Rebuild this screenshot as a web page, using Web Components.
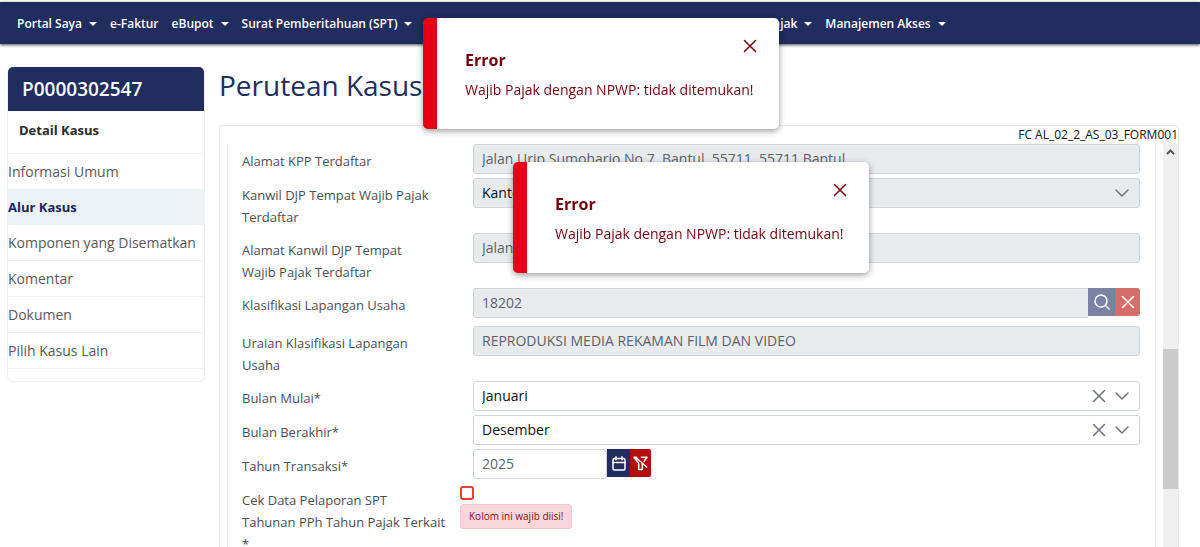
<!DOCTYPE html>
<html lang="id">
<head>
<meta charset="utf-8">
<meta name="viewport" content="width=device-width, initial-scale=1">
<title>Perutean Kasus</title>
<style>
  :root {
    --navy: #212c5f;
    --line: #e9e9ec;
    --field-line: #ced4da;
    --danger: #73000c;
  }
  body {
    margin: 0;
    background: #fff;
    font: 14px/22px "Open Sans", "Noto Sans", sans-serif;
    color: #495057;
    height: 100vh;
    overflow: hidden;
  }
</style>
</head>
<body>
<case-page></case-page>

<script>
const ICONS = {
  chevron: '<svg width="14" height="14" viewBox="0 0 14 14" fill="none" stroke="currentColor" stroke-width="1.5" stroke-linecap="round" stroke-linejoin="round"><path d="M1 4l6 6 6-6"/></svg>',
  times: '<svg width="14" height="14" viewBox="0 0 14 14" fill="none" stroke="currentColor" stroke-width="1.5" stroke-linecap="round"><path d="M1.5 1.5l11 11M12.5 1.5l-11 11"/></svg>',
  search: '<svg width="16" height="16" viewBox="0 0 16 16" fill="none" stroke="currentColor" stroke-width="1.5" stroke-linecap="round"><circle cx="7" cy="7" r="6"/><path d="M11.5 11.5L15 15"/></svg>',
  calendar: '<svg width="14" height="15" viewBox="0 0 14 15" fill="none" stroke="currentColor" stroke-width="1.5" stroke-linecap="round" stroke-linejoin="round"><rect x="1" y="2.5" width="12" height="11.5" rx="1.5"/><path d="M1 6.5h12M4 .8v3M10 .8v3"/></svg>',
  filter: '<svg width="15" height="15" viewBox="0 0 15 15" fill="none" stroke="currentColor" stroke-width="1.5" stroke-linecap="round" stroke-linejoin="round"><path d="M8.5 1.2H14L11 5.4M3.5 1.2H1l4.7 6.2v6h3.6V8.6M2.6 1.2L13.6 11M9.3 7.4V13.4"/></svg>'
};

function define(name, render) {
  customElements.define(name, class extends HTMLElement {
    connectedCallback() {
      if (this.shadowRoot) return;
      const root = this.attachShadow({ mode: 'open' });
      const template = document.createElement('template');
      template.innerHTML = render(this);
      root.append(template.content.cloneNode(true));
    }
  });
}

define('nav-item', el => `
  <style>
    :host { display: block; flex: none; }
    a { display: flex; align-items: center; gap: 7px; color: #fff; text-decoration: none; white-space: nowrap; }
    i { border: 4px solid transparent; border-top-color: #fff; border-bottom: 0; }
  </style>
  <a href="#"><slot></slot>${el.hasAttribute('menu') ? '<i></i>' : ''}</a>`);

define('app-navbar', () => `
  <style>
    :host { display: block; padding-top: 2px; }
    nav { display: flex; align-items: center; gap: 13px; height: 42px; box-sizing: border-box; padding: 2px 17px 0; background: var(--navy);
      box-shadow: 0 1px 3px rgba(0,0,0,.7); font-size: 12px; font-weight: 600; }
  </style>
  <nav><slot></slot></nav>`);

define('side-link', el => `
  <style>
    :host { display: block; border-bottom: 1px solid #f1f1f3; }
    :host([active]) { border-bottom: 0; background: #ebf3f7; font-size: 13px; font-weight: 700; }
    a { display: block; line-height: 35px; color: #58595b; text-decoration: none; }
    :host([active]) a { color: #1b2361; }
  </style>
  <a href="#" ${el.hasAttribute('active') ? 'aria-current="page"' : ''}><slot></slot></a>`);

define('case-sidebar', el => `
  <style>
    :host { display: block; border: 1px solid #f1f1f3; border-radius: 6px; box-sizing: border-box; padding-bottom: 12px; margin: 0 -1px; }
    header { background: var(--navy); color: #fff; font-size: 19px; font-weight: 600; line-height: 44px; padding-left: 14px; border-radius: 5px 5px 0 0; margin-top: -1px; }
    h2 { margin: 0; padding-left: 11px; font-size: 13px; font-weight: 700; line-height: 38px; padding-bottom: 4px; color: #2b2b2b; border-bottom: 1px solid #f1f1f3; }
  </style>
  <header>${el.getAttribute('number')}</header>
  <h2>${el.getAttribute('heading')}</h2>
  <nav><slot></slot></nav>`);

define('form-field', el => {
  const type = el.getAttribute('type') || 'text';
  const value = el.getAttribute('value') || '';
  const disabled = el.hasAttribute('disabled') ? 'disabled' : '';
  let control;
  if (type === 'select') {
    control = `<div class="box ${disabled}"><select id="c" ${disabled}><option>${value}</option></select>
      ${el.hasAttribute('clearable') ? `<button class="plain" aria-label="Hapus pilihan">${ICONS.times}</button>` : ''}
      <span class="arrow">${ICONS.chevron}</span></div>`;
  } else if (type === 'checkbox') {
    control = `<input id="c" type="checkbox"><p class="message">${el.getAttribute('error')}</p>`;
  } else {
    control = `<div class="group"><div class="box ${disabled}"><input id="c" type="text" value="${value}" ${disabled}></div><slot></slot></div>`;
  }
  return `
  <style>
    :host { display: grid; grid-template-columns: 218px minmax(0, 1fr); }
    :host([compact]) .group .box { flex: 0 0 134px; }
    :host([grouped]) .box { border-top-right-radius: 0; border-bottom-right-radius: 0; border-right: 0; }
    :host([roomy]) { padding-bottom: 4px; }
    label { padding: 6px 6px 1px 0; font-size: 13px; }
    .control { padding-left: 13px; }
    .control.checkbox { padding: 3px 0 0; }
    .group { display: flex; align-items: flex-start; }
    .box { flex: 1; min-width: 0; display: flex; align-items: center; height: 30px; box-sizing: border-box; border: 1px solid var(--field-line); border-radius: 3px; background: #fff; }
    .box.disabled { background: #e8ebee; }
    .box input, select { flex: 1; min-width: 0; width: 100%; border: 0; margin: 0; padding: 0 8px; font: inherit; background: none; color: #5c6268; opacity: 1; appearance: none; outline: 0; }
    select { color: #111; }
    .plain { display: flex; border: 0; padding: 0; margin-right: 9px; background: none; color: #6c757d; }
    .arrow { display: flex; color: #6c757d; margin-right: 10px; }
    input[type=checkbox] { display: block; appearance: none; width: 14px; height: 14px; margin: 0; border: 2px solid #ef3a2d; border-radius: 3px; background: #fff; }
    .message { display: inline-block; box-sizing: border-box; margin: 4px 0 0; padding: 0 8px; font-size: 10px; font-weight: 500; line-height: 23px; color: #8c0d14; background: #f8d7da; border: 1px solid #f5c6cb; border-radius: 3px; }
  </style>
  <label for="c">${el.getAttribute('label')}</label>
  <div class="control ${type}">${control}</div>`;
});

define('icon-button', el => `
  <style>
    :host { display: block; flex: none; }
    button { display: flex; align-items: center; justify-content: center; width: 27px; height: 28px; padding: 0; border: 0; color: #fff; background: var(--navy); }
    :host([tone=muted]) button { background: #7a81a2; }
    :host([tone=soft]) button { background: #d36e6a; width: 25px; border-radius: 0 3px 3px 0; }
    :host([tone=navy]) button { width: 23px; }
    :host([tone=red]) button { background: #b50d0b; width: 21px; border-radius: 0 2px 2px 0; }
  </style>
  <button aria-label="${el.getAttribute('label')}">${ICONS[el.getAttribute('icon')]}</button>`);

define('scroll-track', () => `
  <style>
    :host { display: grid; grid-template-rows: 16px 189fr 140fr 58fr; width: 15px; background: #efefef; }
    svg { margin: 4px 3px; }
    i { background: #cbcbcb; grid-row: 3; }
  </style>
  <svg width="9" height="8" viewBox="0 0 9 8" fill="none" stroke="#555" stroke-width="2"><path d="M1 6l3.500-3.500L8 6"/></svg><i></i>`);

define('form-panel', el => `
  <style>
    :host { display: flex; flex-direction: column; flex: 1; min-height: 0; box-sizing: border-box; border: 1px solid var(--line); border-bottom: 0; border-radius: 4px 4px 0 0; }
    .code { text-align: right; font-size: 12px; line-height: 18px; color: #111; }
    .body { flex: 1; min-height: 0; display: flex; gap: 7px; padding-left: 7px; }
    .form { flex: 1; min-width: 0; overflow: hidden; display: flex; flex-direction: column; gap: 4px; padding: 0 15px 0 14px; border: solid var(--line); border-width: 0 1px; }
  </style>
  <div class="code">${el.getAttribute('code')}</div>
  <div class="body"><div class="form"><slot></slot></div><scroll-track aria-hidden="true"></scroll-track></div>`);

define('error-toast', el => `
  <style>
    :host { position: fixed; box-sizing: border-box; width: 356px; padding: 31px 28px 28px; background: #fff; border-left: 14px solid #e60017; border-radius: 5px; box-shadow: 0 2px 6px rgba(0,0,0,.4); color: var(--danger); }
    h3 { margin: 0 0 8px; font-size: 16px; line-height: 22px; font-weight: 700; }
    p { margin: 0; line-height: 22px; white-space: nowrap; }
    button { position: absolute; top: 21px; right: 22px; display: flex; padding: 0; border: 0; background: none; color: var(--danger); }
  </style>
  <h3>${el.getAttribute('heading')}</h3>
  <p><slot></slot></p>
  <button aria-label="Tutup">${ICONS.times}</button>`);

define('case-page', () => `
  <style>
    :host { display: flex; flex-direction: column; height: 100%; }
    .layout { flex: 1; min-height: 0; display: grid; grid-template-columns: 196px minmax(0, 1fr); gap: 15px; padding: 23px 21px 0 8px; }
    case-sidebar { align-self: start; }
    main { display: flex; flex-direction: column; min-height: 0; }
    h1 { margin: 0 0 22px; font-size: 28px; line-height: 36px; font-weight: 400; color: var(--navy); }
    .first { top: 18px; left: 423px; }
    .second { top: 162px; left: 513px; }
  </style>
  <app-navbar>
    <nav-item menu>Portal Saya</nav-item>
    <nav-item>e-Faktur</nav-item>
    <nav-item menu>eBupot</nav-item>
    <nav-item menu>Surat Pemberitahuan (SPT)</nav-item>
    <nav-item menu>e-Pembayaran</nav-item>
    <nav-item menu>Buku Besar</nav-item>
    <nav-item menu>Layanan Kepada Wajib Pajak</nav-item>
    <nav-item menu>Manajemen Akses</nav-item>
  </app-navbar>
  <div class="layout">
    <case-sidebar number="P0000302547" heading="Detail Kasus">
      <side-link>Informasi Umum</side-link>
      <side-link active>Alur Kasus</side-link>
      <side-link>Komponen yang Disematkan</side-link>
      <side-link>Komentar</side-link>
      <side-link>Dokumen</side-link>
      <side-link>Pilih Kasus Lain</side-link>
    </case-sidebar>
    <main>
      <h1>Perutean Kasus</h1>
      <form-panel code="FC AL_02_2_AS_03_FORM001">
        <form-field label="Alamat KPP Terdaftar" value="Jalan Urip Sumoharjo No.7, Bantul, 55711, 55711 Bantul" disabled></form-field>
        <form-field label="Kanwil DJP Tempat Wajib Pajak Terdaftar" type="select" value="Kantor Wilayah DJP" disabled></form-field>
        <form-field label="Alamat Kanwil DJP Tempat<br>Wajib Pajak Terdaftar" value="Jalan" disabled></form-field>
        <form-field label="Klasifikasi Lapangan Usaha" value="18202" disabled grouped roomy>
          <icon-button icon="search" tone="muted" label="Cari"></icon-button>
          <icon-button icon="times" tone="soft" label="Hapus"></icon-button>
        </form-field>
        <form-field label="Uraian Klasifikasi Lapangan<br>Usaha" value="REPRODUKSI MEDIA REKAMAN FILM DAN VIDEO" disabled></form-field>
        <form-field label="Bulan Mulai*" type="select" value="Januari" clearable></form-field>
        <form-field label="Bulan Berakhir*" type="select" value="Desember" clearable></form-field>
        <form-field label="Tahun Transaksi*" value="2025" compact>
          <icon-button icon="calendar" tone="navy" label="Pilih tahun"></icon-button>
          <icon-button icon="filter" tone="red" label="Hapus filter"></icon-button>
        </form-field>
        <form-field label="Cek Data Pelaporan SPT<br>Tahunan PPh Tahun Pajak Terkait<br>*" type="checkbox" error="Kolom ini wajib diisi!"></form-field>
      </form-panel>
    </main>
  </div>
  <error-toast class="first" heading="Error">Wajib Pajak dengan NPWP: tidak ditemukan!</error-toast>
  <error-toast class="second" heading="Error">Wajib Pajak dengan NPWP: tidak ditemukan!</error-toast>`);
</script>
</body>
</html>
